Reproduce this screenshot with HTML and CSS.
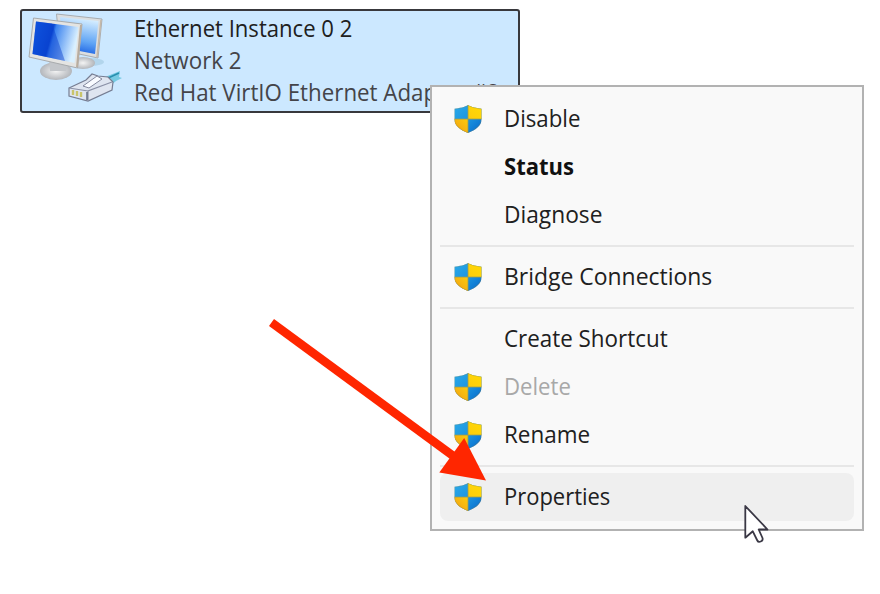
FILE: index.html
```html
<!DOCTYPE html>
<html lang="en">
<head>
<meta charset="utf-8">
<title>Network Connections</title>
<link rel="stylesheet" href="styles.css">
</head>
<body>
<svg width="0" height="0" class="defs">
  <defs>
    <linearGradient id="blue" x1="0" y1="0" x2="1" y2="1"><stop offset="0" stop-color="#2ba9e8"/><stop offset=".5" stop-color="#1c95e0"/><stop offset="1" stop-color="#0567ca"/></linearGradient>
    <linearGradient id="gold" x1="1" y1="0" x2="0" y2="1"><stop offset="0" stop-color="#ffda05"/><stop offset=".5" stop-color="#fccb0c"/><stop offset="1" stop-color="#ef9d14"/></linearGradient>
    <clipPath id="shieldShape"><path d="M14 0C11 2 5 3.300 0 3.800V14C0 21 6 25.500 14 28.500C22 25.500 28 21 28 14V3.800C23 3.300 17 2 14 0Z"/></clipPath>
    <symbol id="shield" viewBox="0 0 28 28.500">
      <g clip-path="url(#shieldShape)">
        <path fill="url(#blue)" d="M0 0H28V29H0Z"/>
        <path fill="url(#gold)" d="M14 0H28V14.300H14V29H0V14.300H14Z"/>
        <path fill="none" stroke="#9a9d55" stroke-width=".8" d="M14 0V29M0 14.300H28"/>
        <path fill="none" stroke="#b8801f" stroke-opacity=".25" stroke-width="1.400" d="M14 0C11 2 5 3.300 0 3.800V14C0 21 6 25.500 14 28.500C22 25.500 28 21 28 14V3.800C23 3.300 17 2 14 0Z"/>
      </g>
    </symbol>
  </defs>
</svg>
<main class="desktop">
  <section class="tile">
    <svg class="adapter" viewBox="28 12 96 94">
      <defs>
        <linearGradient id="screen" x1="0" y1="0" x2="1" y2=".25"><stop offset="0" stop-color="#1768ee"/><stop offset=".46" stop-color="#0b49d4"/><stop offset=".52" stop-color="#3d84ef"/><stop offset="1" stop-color="#d9f0ff"/></linearGradient>
        <linearGradient id="screenBack" x1=".2" y1="1" x2=".4" y2="0"><stop offset="0" stop-color="#1156df"/><stop offset=".4" stop-color="#5fa4f5"/><stop offset="1" stop-color="#d5edff"/></linearGradient>
        <radialGradient id="stand"><stop offset="0" stop-color="#f4f4f4"/><stop offset="1" stop-color="#b3b6bb"/></radialGradient>
      </defs>
      <ellipse cx="90" cy="62" rx="14" ry="4" fill="#8db8cf" opacity=".4"/>
      <ellipse cx="83" cy="63" rx="12" ry="6" fill="url(#stand)"/>
      <path d="M56.500 14L102 19L98 58L60 50Z" fill="#dcdedf" stroke="#a9adb1"/>
      <path d="M60 17L98.500 21L95 54L64 48Z" fill="url(#screenBack)"/>
      <path d="M101 20L97 57" stroke="#c5b8a8" stroke-width="1.500"/>
      <ellipse cx="56" cy="71" rx="16" ry="9" fill="url(#stand)"/>
      <path d="M49 59L69 63L66 71H50Z" fill="#c3c6ca"/>
      <path d="M33.500 18L82 24L77.500 68L29 57Z" fill="#e4e4e2" stroke="#a8abad"/>
      <path d="M81 25L77 67" stroke="#b9ad9f" stroke-width="2"/>
      <path d="M36 21.500L78.500 27L74.500 63L32.500 54Z" fill="url(#screen)"/>
      <path d="M36 21.500L52 23.500L65 61L32.500 54Z" fill="#063bcc" opacity=".45"/>
      <path d="M105 77L120 71L119 77L122 78L116 81L110 86Z" fill="#66c4dd" opacity=".85"/>
      <path d="M106 79L119 73" stroke="#278faf" stroke-width="1.500"/>
      <path d="M69 88L86 80L92 74L98 76L108 77L113 82L112 90L88 101L69 96Z" fill="#dfe5f0" stroke="#767d92" stroke-width="1.200"/>
      <path d="M69 88L88 91L112 82L88 91V101" fill="none" stroke="#8b91a6" stroke-width="1.200"/>
      <path d="M83 86L97 76L102 79L89 88Z" fill="#f9fbff" stroke="#858a9f"/>
      <path d="M73 90V95M77 91V96M81 92V97" stroke="#c9c46a" stroke-width="2.400"/>
      <path d="M87 92V100" stroke="#636b80" stroke-width="1.500"/>
    </svg>
    <div class="info">
      <span class="name">Ethernet Instance 0 2</span>
      <span class="network">Network 2</span>
      <span class="device">Red Hat VirtIO Ethernet Adapter #2</span>
    </div>
  </section>

  <nav class="menu">
    <div class="item"><svg class="shield"><use href="#shield"/></svg><span class="label disable">Disable</span></div>
    <div class="item"><span class="label status">Status</span></div>
    <div class="item"><span class="label diagnose">Diagnose</span></div>
    <div class="sep"></div>
    <div class="item"><svg class="shield"><use href="#shield"/></svg><span class="label bridge">Bridge Connections</span></div>
    <div class="sep"></div>
    <div class="item"><span class="label shortcut">Create Shortcut</span></div>
    <div class="item"><svg class="shield"><use href="#shield"/></svg><span class="label delete">Delete</span></div>
    <div class="item"><svg class="shield"><use href="#shield"/></svg><span class="label rename">Rename</span></div>
    <div class="sep"></div>
    <div class="item active"><svg class="shield"><use href="#shield"/></svg><span class="label properties">Properties</span></div>
  </nav>

  <svg class="overlay" viewBox="0 0 880 594">
    <path d="M271.500 322.500L456 458" stroke="#ff2600" stroke-width="8.500"/>
    <path d="M486 480.500L439.300 472.500L464.200 438Z" fill="#ff2600"/>
    <path d="M745.300 506V537.700L752.800 531.300L757.300 540.500C758.500 543 763.500 541.500 762.500 538L758.700 529.500H767.500Z" fill="#fff" stroke="#3a3845" stroke-width="1.800" stroke-linejoin="round"/>
  </svg>
</main>
</body>
</html>
```
FILE: styles.css
```css
body {
  margin: 0;
  background: #fff;
  font-family: "Open Sans", "Noto Sans", sans-serif;
  font-size: 23px;
  color: #202020;
}

.defs {
  position: absolute;
}

.desktop {
  position: relative;
  width: 880px;
  height: 594px;
  overflow: hidden;
}

.tile {
  position: absolute;
  left: 20px;
  top: 9px;
  box-sizing: border-box;
  width: 500px;
  height: 104px;
  display: flex;
  padding: 1px 6px;
  background: #cce8ff;
  border: 2px solid #38383c;
  border-radius: 3px;
}

.adapter {
  flex: none;
  width: 96px;
  height: 94px;
}

.info {
  display: flex;
  flex-direction: column;
  align-items: flex-start;
  padding-left: 10px;
  line-height: 32px;
  white-space: nowrap;
}

.info span,
.label {
  transform-origin: 0 50%;
  transform: scaleX(var(--stretch, 0.96));
}

.name { --stretch: 0.96; }
.network { --stretch: 0.972; }
.device { --stretch: 0.97; }
.disable { --stretch: 0.967; }
.status { --stretch: 0.958; }
.diagnose { --stretch: 0.988; }
.bridge { --stretch: 0.997; }
.shortcut { --stretch: 0.973; }
.delete { --stretch: 0.963; }
.rename { --stretch: 0.977; }
.properties { --stretch: 0.955; }

.network,
.device {
  color: #444449;
}

.menu {
  position: absolute;
  left: 430px;
  top: 85px;
  box-sizing: border-box;
  width: 434px;
  padding: 8px;
  background: #f9f9f9;
  border: 2px solid #b2b2b2;
}

.item {
  display: grid;
  grid-template-columns: 28px auto;
  column-gap: 22px;
  justify-content: start;
  align-items: center;
  height: 48px;
  padding-left: 14px;
  border-radius: 8px;
}

.label {
  grid-column: 2;
  height: 48px;
  line-height: 46px;
  white-space: nowrap;
}

.active {
  background: #efefef;
}

.shield {
  width: 28px;
  height: 28px;
}

.sep {
  height: 2px;
  margin: 6px 0;
  background: #e7e7e7;
}

.status {
  font-weight: 700;
  color: #111;
}

.delete {
  color: #a8a8a8;
}

.overlay {
  position: absolute;
  inset: 0;
  width: 880px;
  height: 594px;
}
```
